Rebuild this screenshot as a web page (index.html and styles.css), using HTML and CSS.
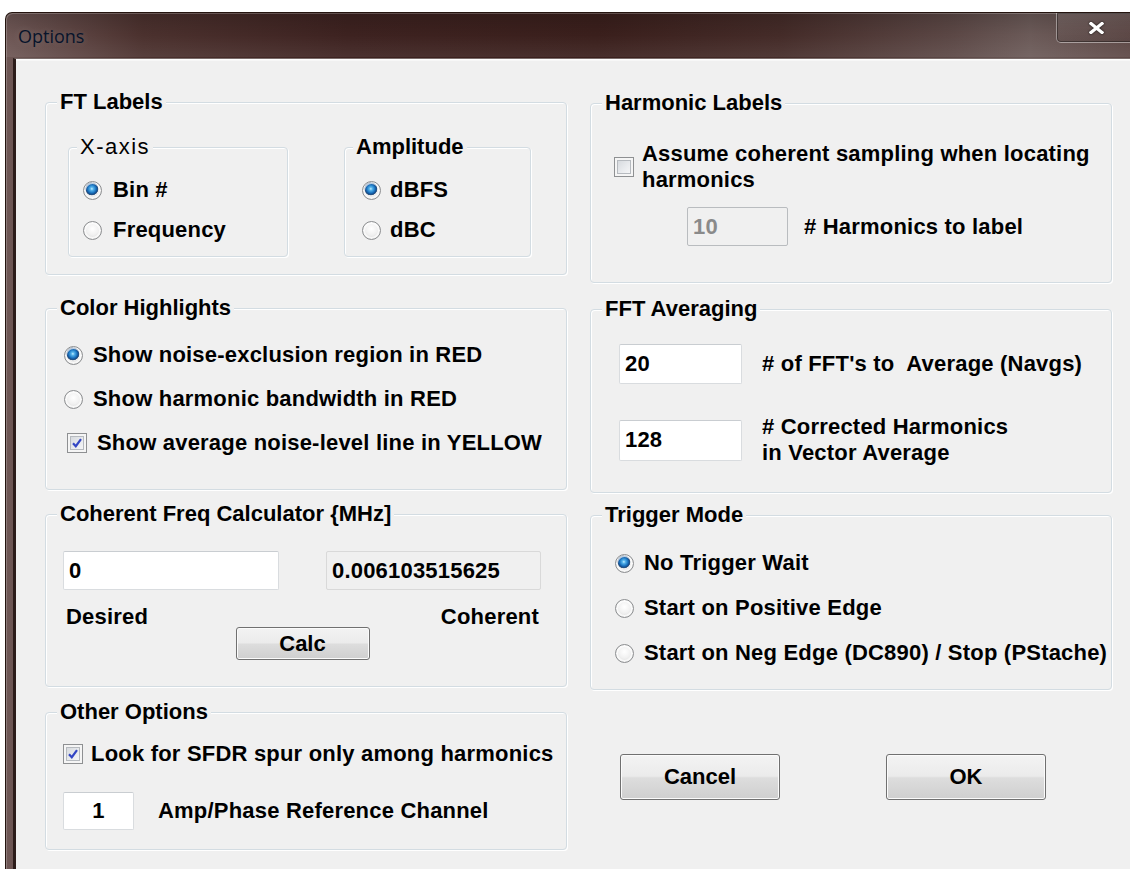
FILE: index.html
```html
<!DOCTYPE html>
<html lang="en">
<head>
<meta charset="utf-8">
<title>Options</title>
<link rel="stylesheet" href="styles.css">
</head>
<body>
<div class="window">
  <div class="titlebar">
    <span class="title">Options</span>
    <button class="close" aria-label="Close">
      <svg width="15" height="12" viewBox="0 0 15 12"><path d="M2 1.5 L13 10.5 M13 1.5 L2 10.5" stroke="#fff" stroke-width="3.2" stroke-linecap="square" fill="none"/></svg>
    </button>
  </div>

  <div class="client">
    <div class="columns">
      <!-- left column -->
      <div class="col col-left">
        <section class="group g-ft">
          <h2 class="group-title">FT Labels</h2>
          <div class="ft-body">
            <section class="group sub g-xaxis">
              <h3 class="group-title sub-title light">X-axis</h3>
              <div class="opts">
                <label class="opt"><span class="radio on"></span>Bin #</label>
                <label class="opt"><span class="radio"></span>Frequency</label>
              </div>
            </section>
            <section class="group sub g-amp">
              <h3 class="group-title sub-title">Amplitude</h3>
              <div class="opts">
                <label class="opt"><span class="radio on"></span>dBFS</label>
                <label class="opt"><span class="radio"></span>dBC</label>
              </div>
            </section>
          </div>
        </section>

        <section class="group g-color">
          <h2 class="group-title">Color Highlights</h2>
          <div class="opts opts-color">
            <label class="opt"><span class="radio on"></span>Show noise-exclusion region in RED</label>
            <label class="opt"><span class="radio"></span>Show harmonic bandwidth in RED</label>
            <label class="opt opt-check indent"><span class="check"><svg width="14" height="14" viewBox="0 0 14 14"><path d="M3 7.2 L5.8 10.2 L11 3.2" stroke="#3346c4" stroke-width="2.2" fill="none"/></svg></span>Show average noise-level line in YELLOW</label>
          </div>
        </section>

        <section class="group g-coh">
          <h2 class="group-title">Coherent Freq Calculator {MHz]</h2>
          <div class="gbody coh-body">
            <div class="coh-fields">
              <input class="field f-desired" type="text" value="0">
              <input class="field f-coherent" type="text" value="0.006103515625" readonly>
            </div>
            <div class="calc-row">
              <span class="cap-desired">Desired</span>
              <button class="btn btn-calc">Calc</button>
              <span class="cap-coherent">Coherent</span>
            </div>
          </div>
        </section>

        <section class="group g-other">
          <h2 class="group-title">Other Options</h2>
          <div class="gbody other-body">
            <label class="opt opt-check sfdr"><span class="check"><svg width="14" height="14" viewBox="0 0 14 14"><path d="M3 7.2 L5.8 10.2 L11 3.2" stroke="#3346c4" stroke-width="2.2" fill="none"/></svg></span>Look for SFDR spur only among harmonics</label>
            <div class="field-row ref-row">
              <input class="field f-ref" type="text" value="1">
              <span>Amp/Phase Reference Channel</span>
            </div>
          </div>
        </section>
      </div>

      <!-- right column -->
      <div class="col col-right">
        <section class="group g-harm">
          <h2 class="group-title">Harmonic Labels</h2>
          <div class="gbody harm-body">
            <label class="opt opt-check coherent-opt"><span class="check"></span><span class="two-line">Assume coherent sampling when locating<br>harmonics</span></label>
            <div class="field-row harm-row">
              <input class="field f-harm" type="text" value="10" disabled>
              <span># Harmonics to label</span>
            </div>
          </div>
        </section>

        <section class="group g-fft">
          <h2 class="group-title">FFT Averaging</h2>
          <div class="gbody fft-body">
            <div class="field-row navg-row">
              <input class="field f-fft" type="text" value="20">
              <span># of FFT's to&nbsp; Average (Navgs)</span>
            </div>
            <div class="field-row vec-row">
              <input class="field f-fft f-vec" type="text" value="128">
              <span class="two-line"># Corrected Harmonics<br>in Vector Average</span>
            </div>
          </div>
        </section>

        <section class="group g-trig">
          <h2 class="group-title">Trigger Mode</h2>
          <div class="opts opts-trig">
            <label class="opt"><span class="radio on"></span>No Trigger Wait</label>
            <label class="opt"><span class="radio"></span>Start on Positive Edge</label>
            <label class="opt"><span class="radio"></span>Start on Neg Edge (DC890) / Stop (PStache)</label>
          </div>
        </section>

        <div class="actions">
          <button class="btn btn-dlg">Cancel</button>
          <button class="btn btn-dlg">OK</button>
        </div>
      </div>
    </div>
  </div>
</div>
</body>
</html>
```

FILE: styles.css
```css
html, body {
  margin: 0;
  height: 100%;
  background: #ffffff;
  overflow: hidden;
}

body {
  font-family: "Liberation Sans", Arial, sans-serif;
  font-weight: bold;
  font-size: 22px;
  line-height: 26px;
  letter-spacing: 0.2px;
  color: #000;
}

/* ---------- window frame ---------- */
.window {
  margin: 12px 0 0 5px;
  width: 1140px;
  height: 880px;
  box-sizing: border-box;
  border: 1px solid #24140f;
  border-bottom: none;
  border-radius: 7px 7px 0 0;
  padding-left: 7px;
  display: flex;
  flex-direction: column;
  background:
    linear-gradient(180deg, rgba(0,0,0,0.16) 0, rgba(0,0,0,0) 22px, rgba(255,255,255,0.07) 44px) top / 100% 44px no-repeat,
    linear-gradient(90deg, #6e5755 0%, #5f4745 5%, #4b312e 12%, #3d2220 30%, #3a1f1c 52%, #442b28 68%, #5b4745 83%, #6b5a58 90%, #5b4543 100%);
  box-shadow: inset 1px 1px 0 rgba(255,255,255,0.22);
}

.titlebar {
  height: 45px;
  display: flex;
  align-items: center;
}

.title {
  padding-left: 5px;
  font-family: "Open Sans", "Noto Sans", sans-serif;
  font-weight: normal;
  font-size: 18px;
  letter-spacing: 0;
  color: #07142b;
  text-shadow: 0 0 7px rgba(255,255,255,0.18);
}

.close {
  margin-left: auto;
  align-self: flex-start;
  width: 88px;
  height: 30px;
  padding: 0 8px 0 0;
  border: 1px solid rgba(255,255,255,0.38);
  border-top: none;
  border-radius: 0 0 0 5px;
  background: linear-gradient(180deg, rgba(255,255,255,0.10), rgba(255,255,255,0.04) 50%, rgba(0,0,0,0.06));
  box-shadow: inset 0 0 0 1px rgba(0,0,0,0.35);
  display: flex;
  align-items: center;
  justify-content: center;
}

.close svg {
  filter: drop-shadow(0 0 1px rgba(0,0,0,0.8));
}

.client {
  flex: 1;
  background: #f0f0f0;
  border-top: 1px solid #7a6d6b;
  border-left: 3px solid #2c1c1a;
  box-shadow: inset 0 1px 0 #ffffff, inset 0 2px 0 #f7f7f7;
}

/* ---------- dialog layout ---------- */
.columns {
  display: grid;
  grid-template-columns: 522px 522px;
  column-gap: 23px;
  padding-left: 29px;
  align-items: start;
}

.col {
  display: flex;
  flex-direction: column;
}

.col-left { padding-top: 43px; }
.col-right { padding-top: 44px; }

/* ---------- group boxes ---------- */
.group {
  box-sizing: border-box;
  border: 1px solid #d3dce2;
  border-radius: 4px;
  box-shadow: inset 1px 1px 0 #ffffff, 1px 1px 0 #ffffff;
  margin: 0;
}

.group-title {
  margin: -12px 0 0 11px;
  padding: 0 3px;
  width: fit-content;
  background: #f0f0f0;
  font-size: 22px;
  line-height: 22px;
  font-weight: bold;
  letter-spacing: 0;
}

.sub-title { margin-left: 8px; }
.light { font-weight: normal; letter-spacing: 1.5px; }

.opt {
  display: flex;
  align-items: center;
  gap: 11px;
  height: 30px;
  white-space: nowrap;
}

.opts {
  display: flex;
  flex-direction: column;
}

/* radio buttons */
.radio {
  flex: none;
  width: 19px;
  height: 19px;
  box-sizing: border-box;
  border-radius: 50%;
  border: 1px solid #8c8e90;
  background: radial-gradient(circle at 50% 40%, #ffffff 0%, #f1f1f1 45%, #d2d2d2 100%);
  box-shadow: inset 0 0 0 2px rgba(255,255,255,0.7);
}

.radio.on {
  background:
    radial-gradient(circle at 46% 40%, #c9efff 0, #58b6ec 1.5px, #1c76c2 4px, #134d8e 5.5px, #3b5b7f 6.2px, rgba(0,0,0,0) 6.8px),
    radial-gradient(circle at 50% 40%, #ffffff 0%, #f1f1f1 45%, #d2d2d2 100%);
}

/* check boxes */
.check {
  flex: none;
  width: 20px;
  height: 20px;
  box-sizing: border-box;
  border: 1px solid #8e9092;
  background: linear-gradient(135deg, #cfd3d8 0%, #e9ebee 55%, #fbfbfb 100%);
  box-shadow: inset 0 0 0 2px #f5f5f5, inset 0 0 0 3px #b6babf;
  display: flex;
  align-items: center;
  justify-content: center;
}

.opt-check { gap: 9px; }

/* text fields */
.field {
  box-sizing: border-box;
  margin: 0;
  padding: 0 5px;
  height: 39px;
  border: 1px solid #d9dcdf;
  border-top-color: #c9cdd1;
  border-radius: 2px;
  background: #ffffff;
  font: inherit;
  letter-spacing: 0.2px;
  color: #000;
  outline: none;
}

.field[readonly] {
  background: #f0f0f0;
  border-color: #d9d9d9;
}

.field:disabled {
  background: #f0f0f0;
  border-color: #b9bcbf;
  color: #8a8a8a;
  -webkit-text-fill-color: #8a8a8a;
  opacity: 1;
}

.field-row {
  display: flex;
  align-items: center;
  white-space: nowrap;
}

.two-line {
  line-height: 26px;
  white-space: nowrap;
}

/* push buttons */
.btn {
  box-sizing: border-box;
  margin: 0;
  border: 1px solid #707070;
  border-radius: 3px;
  background: linear-gradient(180deg, #f3f3f3 0%, #ebebeb 48%, #dddddd 52%, #cfcfcf 100%);
  box-shadow: inset 0 0 0 1px #fbfbfb;
  font: inherit;
  color: #000;
  padding: 0;
}

/* ---------- FT Labels ---------- */
.g-ft {
  height: 173px;
  margin-bottom: 33px;
}

.ft-body {
  display: flex;
  gap: 56px;
  margin: 34px 0 0 22px;
}

.sub {
  height: 110px;
}

.g-xaxis { width: 220px; }
.g-amp { width: 187px; }

.g-xaxis .opts { padding: 17px 0 0 14px; gap: 10px; }
.g-amp .opts { padding: 17px 0 0 17px; gap: 10px; }
.g-amp .opt { gap: 9px; }

/* ---------- Color Highlights ---------- */
.g-color {
  height: 182px;
  margin-bottom: 24px;
}

.opts-color {
  padding: 21px 0 0 18px;
  gap: 14px;
}

.opts-color .opt { gap: 10px; }
.opts-color .indent { padding-left: 3px; }

/* ---------- Coherent Freq Calculator ---------- */
.g-coh {
  height: 173px;
  margin-bottom: 25px;
}

.coh-body {
  padding: 0 24px 0 17px;
}

.coh-fields {
  display: flex;
  gap: 47px;
  margin-top: 26px;
}

.f-desired { width: 216px; }
.f-coherent { width: 215px; }

.calc-row {
  display: grid;
  grid-template-columns: 1fr auto 1fr;
  margin-top: 14px;
}

.cap-desired { padding-left: 3px; }
.cap-coherent { justify-self: end; padding-right: 3px; }

.btn-calc {
  width: 134px;
  height: 33px;
  margin-top: 23px;
  line-height: 30px;
}

/* ---------- Other Options ---------- */
.g-other {
  height: 138px;
}

.other-body {
  padding-left: 17px;
}

.sfdr {
  margin-top: 16px;
  gap: 8px;
}

.ref-row {
  margin-top: 23px;
  gap: 24px;
}

.f-ref {
  width: 71px;
  height: 38px;
  text-align: center;
}

/* ---------- Harmonic Labels ---------- */
.g-harm {
  height: 180px;
  margin-bottom: 26px;
}

.harm-body {
  padding-left: 23px;
}

.coherent-opt {
  height: auto;
  margin-top: 25px;
  gap: 8px;
  padding-top: 2px;
}

.harm-row {
  margin: 14px 0 0 73px;
  gap: 16px;
}

.f-harm {
  width: 101px;
  height: 39px;
}

/* ---------- FFT Averaging ---------- */
.g-fft {
  height: 184px;
  margin-bottom: 22px;
}

.fft-body {
  padding-left: 28px;
}

.navg-row {
  margin-top: 24px;
  gap: 20px;
}

.vec-row {
  margin-top: 30px;
  gap: 20px;
}

.f-fft {
  width: 123px;
  height: 40px;
}

.f-vec { height: 41px; }

/* ---------- Trigger Mode ---------- */
.g-trig {
  height: 175px;
}

.opts-trig {
  padding: 22px 0 0 24px;
  gap: 15px;
}

.opts-trig .opt { gap: 10px; }

/* ---------- dialog buttons ---------- */
.actions {
  display: flex;
  gap: 106px;
  margin: 64px 0 0 30px;
}

.btn-dlg {
  width: 160px;
  height: 46px;
}
```
